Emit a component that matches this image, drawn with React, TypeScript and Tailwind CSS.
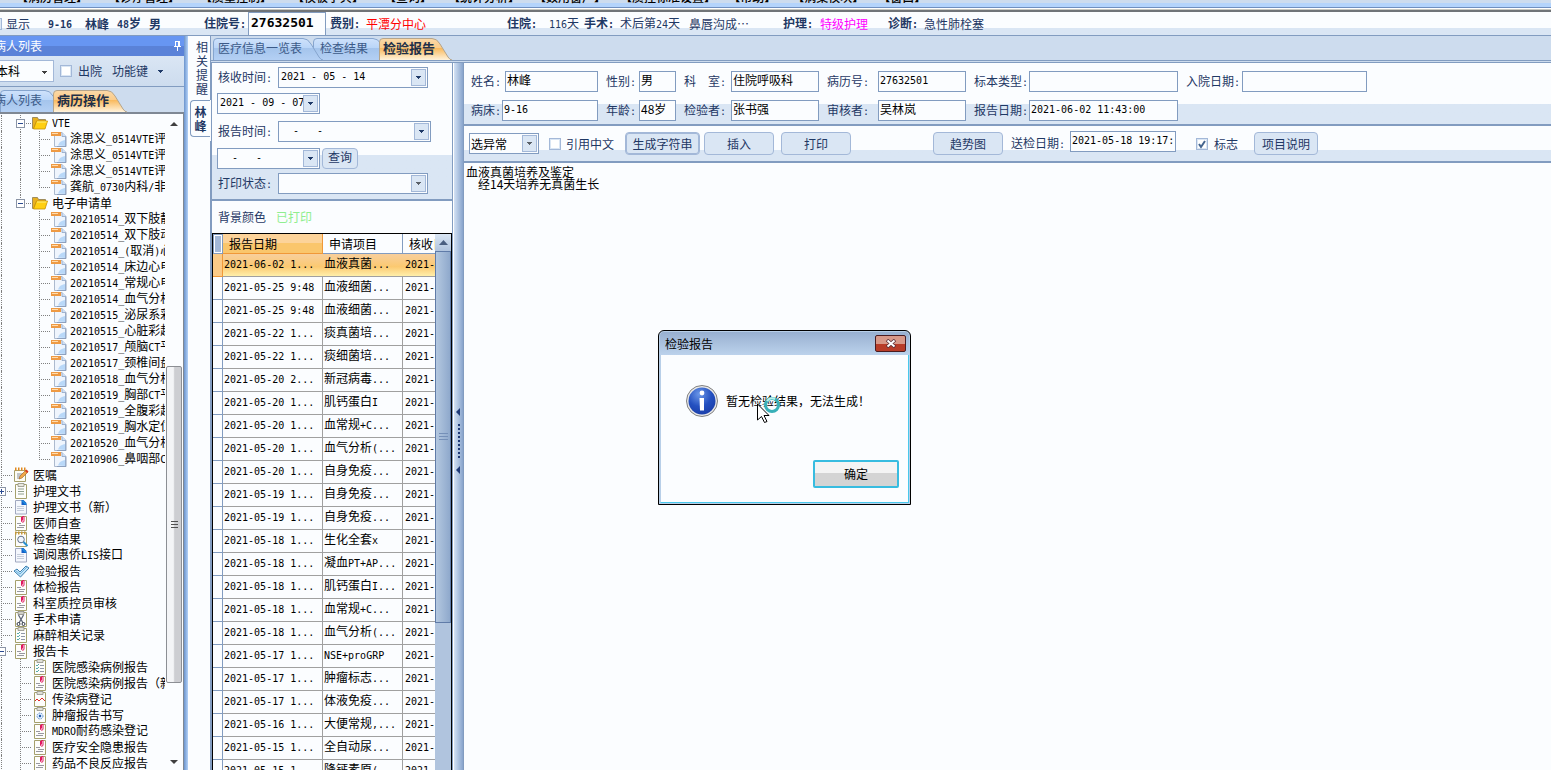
import { ReactNode } from "react";

const menus = [
  { text: "【病历管理】", space: "mr-5" },
  { text: "【诊疗管理】", space: "mr-5" },
  { text: "【质量控制】", space: "mr-5" },
  { text: "【模板字典】", space: "mr-5" },
  { text: "【查询】", space: "mr-4" },
  { text: "【统计分析】", space: "mr-3.5" },
  { text: "【数用窗户】", space: "mr-3.5" },
  { text: "【质控标准设置】", space: "mr-3" },
  { text: "【帮助】", space: "mr-4" },
  { text: "【病案模块】", space: "mr-3.5" },
  { text: "【窗口】", space: "" },
];

type IconName =
  | "folder"
  | "doc"
  | "pencil"
  | "clipboard"
  | "page"
  | "clip"
  | "search"
  | "check"
  | "scissors"
  | "list"
  | "wave"
  | "target";

type TreeRow = {
  text: string;
  icon: IconName;
  depth: 1 | 2 | 3;
  box?: "+" | "-";
  last?: boolean;
  guides?: boolean[];
};

const doc = (text: string, vte = false, last = false): TreeRow => ({
  text,
  icon: "doc",
  depth: 3,
  last,
  guides: [true, vte],
});

const tree: TreeRow[] = [
  { text: "VTE", icon: "folder", depth: 2, box: "-", guides: [true] },
  doc("涂思义_0514VTE评估", true),
  doc("涂思义_0514VTE评估", true),
  doc("涂思义_0514VTE评估", true),
  doc("龚航_0730内科/非手术", true, true),
  { text: "电子申请单", icon: "folder", depth: 2, box: "-", last: true, guides: [true] },
  doc("20210514_双下肢静脉"),
  doc("20210514_双下肢动脉"),
  doc("20210514_(取消)心电"),
  doc("20210514_床边心电图"),
  doc("20210514_常规心电图"),
  doc("20210514_血气分析"),
  doc("20210515_泌尿系彩超"),
  doc("20210515_心脏彩超"),
  doc("20210517_颅脑CT平扫"),
  doc("20210517_颈椎间盘"),
  doc("20210518_血气分析"),
  doc("20210519_胸部CT平扫"),
  doc("20210519_全腹彩超"),
  doc("20210519_胸水定位"),
  doc("20210520_血气分析"),
  doc("20210906_鼻咽部CT", false, true),
  { text: "医嘱", icon: "pencil", depth: 1 },
  { text: "护理文书", icon: "clipboard", depth: 1, box: "+" },
  { text: "护理文书（新）", icon: "page", depth: 1 },
  { text: "医师自查", icon: "clip", depth: 1 },
  { text: "检查结果", icon: "search", depth: 1 },
  { text: "调阅惠侨LIS接口", icon: "page", depth: 1 },
  { text: "检验报告", icon: "check", depth: 1 },
  { text: "体检报告", icon: "clip", depth: 1 },
  { text: "科室质控员审核", icon: "clip", depth: 1 },
  { text: "手术申请", icon: "scissors", depth: 1 },
  { text: "麻醉相关记录", icon: "list", depth: 1 },
  { text: "报告卡", icon: "clip", depth: 1, box: "-" },
  { text: "医院感染病例报告", icon: "list", depth: 2, guides: [true] },
  { text: "医院感染病例报告（新）", icon: "clip", depth: 2, guides: [true] },
  { text: "传染病登记", icon: "wave", depth: 2, guides: [true] },
  { text: "肿瘤报告书写", icon: "target", depth: 2, guides: [true] },
  { text: "MDRO耐药感染登记", icon: "clip", depth: 2, guides: [true] },
  { text: "医疗安全隐患报告", icon: "clip", depth: 2, guides: [true] },
  { text: "药品不良反应报告", icon: "clip", depth: 2, guides: [true] },
];

const reports = [
  ["2021-06-02 1...", "血液真菌..."],
  ["2021-05-25 9:48", "血液细菌..."],
  ["2021-05-25 9:48", "血液细菌..."],
  ["2021-05-22 1...", "痰真菌培..."],
  ["2021-05-22 1...", "痰细菌培..."],
  ["2021-05-20 2...", "新冠病毒..."],
  ["2021-05-20 1...", "肌钙蛋白I"],
  ["2021-05-20 1...", "血常规+C..."],
  ["2021-05-20 1...", "血气分析(..."],
  ["2021-05-20 1...", "自身免疫..."],
  ["2021-05-19 1...", "自身免疫..."],
  ["2021-05-19 1...", "自身免疫..."],
  ["2021-05-18 1...", "生化全套x"],
  ["2021-05-18 1...", "凝血PT+AP..."],
  ["2021-05-18 1...", "肌钙蛋白I..."],
  ["2021-05-18 1...", "血常规+C..."],
  ["2021-05-18 1...", "血气分析(..."],
  ["2021-05-17 1...", "NSE+proGRP"],
  ["2021-05-17 1...", "肿瘤标志..."],
  ["2021-05-17 1...", "体液免疫..."],
  ["2021-05-16 1...", "大便常规,..."],
  ["2021-05-15 1...", "全自动尿..."],
  ["2021-05-15 1...", "降钙素原(..."],
];

const fieldRows = [
  [
    { label: "姓名:", value: "林峰", lw: "w-[34px]", iw: "w-[93px]" },
    { label: "性别:", value: "男", lw: "w-[33px]", iw: "w-[37px]" },
    { label: "科　室:", value: "住院呼吸科", lw: "w-[47px]", iw: "w-[88px]" },
    { label: "病历号:", value: "27632501", lw: "w-[51px]", iw: "w-[88px]" },
    { label: "标本类型:", value: "", lw: "w-[55px]", iw: "w-[149px]" },
    { label: "入院日期:", value: "", lw: "w-[56px]", iw: "w-[125px]" },
  ],
  [
    { label: "病床:", value: "9-16", lw: "w-[31px]", iw: "w-[96px]" },
    { label: "年龄:", value: "48岁", lw: "w-[33px]", iw: "w-[37px]" },
    { label: "检验者:", value: "张书强", lw: "w-[47px]", iw: "w-[88px]" },
    { label: "审核者:", value: "吴林岚", lw: "w-[51px]", iw: "w-[88px]" },
    { label: "报告日期:", value: "2021-06-02 11:43:00", lw: "w-[55px]", iw: "w-[149px]" },
  ],
];

// Half-width runs use a monospaced face, two of them fill one CJK cell
const Mixed = ({ children }: { children: string }) => (
  <>
    {children.split(/([\x20-\x7e]+)/).map((part, i) =>
      i % 2 ? (
        <span key={i} className="font-['DejaVu_Sans_Mono',monospace] text-[10px] whitespace-pre">
          {part}
        </span>
      ) : (
        part
      ),
    )}
  </>
);

const isLatin = (value: string) => /^[\x20-\x7e]+$/.test(value);

const TextBox = ({ id, value, width }: { id: string; value: string; width: string }) => (
  <input
    id={id}
    defaultValue={value}
    className={`h-[21px] border border-[#829cc0] bg-[#fbfdff] pl-px text-black outline-none ${width} ${
      isLatin(value) ? "pb-0.5 font-['DejaVu_Sans_Mono',monospace] text-[10px]" : "pb-1 text-xs"
    }`}
  />
);

const Arrow = ({ color = "#1f3a68" }: { color?: string }) => (
  <svg width="5" height="3" viewBox="0 0 5 3" shapeRendering="crispEdges">
    <path d="M0 0h5v1H4v1H3v1H2V2H1V1H0z" fill={color} />
  </svg>
);

const DateCombo = ({ id, label, value, width }: { id: string; label: string; value: string; width: string }) => (
  <div className={`flex h-[21px] border border-[#829cc0] bg-[#fbfdff] p-px ${width}`}>
    <input
      id={id}
      aria-label={label}
      defaultValue={value}
      className="min-w-0 flex-1 bg-transparent pb-0.5 pl-px font-['DejaVu_Sans_Mono',monospace] text-[10px] text-black outline-none"
    />
    <button
      aria-label={`${label}选择`}
      className="flex w-[15px] items-center justify-center border border-[#a3b8d8] bg-[#dae6f4]"
    >
      <Arrow />
    </button>
  </div>
);

const SelectBox = ({ id, label, value, width }: { id: string; label: string; value: string; width: string }) => (
  <div className={`relative h-[21px] ${width}`}>
    <select
      id={id}
      aria-label={label}
      className="h-full w-full appearance-none border border-[#829cc0] bg-[#fbfdff] px-px text-xs text-black outline-none"
    >
      <option>{value}</option>
    </select>
    <span className="pointer-events-none absolute top-0.5 right-0.5 bottom-0.5 flex w-[15px] items-center justify-center border border-[#a3b8d8] bg-[#dae6f4]">
      <Arrow color="#5a6068" />
    </span>
  </div>
);

const PushButton = ({ children, className = "" }: { children: ReactNode; className?: string }) => (
  <button
    className={`rounded-sm border border-[#a3b8d8] bg-[#dae6f4] text-center leading-none text-[#1f3864] ${className}`}
  >
    {children}
  </button>
);

const CheckBox = ({ id, checked = false }: { id: string; checked?: boolean }) => (
  <span className="relative flex size-3">
    <input
      id={id}
      type="checkbox"
      defaultChecked={checked}
      className="peer size-3 appearance-none border border-[#a3b8d8] bg-white ring-1 ring-[#dae6f4] ring-inset"
    />
    <svg
      viewBox="0 0 12 12"
      className="pointer-events-none absolute inset-0 hidden peer-checked:block"
      fill="none"
      stroke="#44658f"
      strokeWidth="2"
    >
      <path d="M3 6l2 3 4-6" />
    </svg>
  </span>
);

const Tab = ({
  children,
  active = false,
  width,
  shape,
  className = "",
}: {
  children: ReactNode;
  active?: boolean;
  width: string;
  shape: number;
  className?: string;
}) => (
  <button
    role="tab"
    aria-selected={active}
    className={`relative h-[22px] shrink-0 pb-[3px] text-left ${width} ${className}`}
  >
    <svg className="absolute inset-0 overflow-visible" width={shape} height="22">
      <defs>
        <linearGradient id={active ? "tabOn" : "tabOff"} x1="0" y1="0" x2="0" y2="1">
          <stop offset="0" stopColor={active ? "#fbd9a8" : "#cfe2fb"} />
          <stop offset="0.45" stopColor={active ? "#fbcb88" : "#b9d5f8"} />
          <stop offset="0.45" stopColor={active ? "#f9b95c" : "#a4c4ec"} />
          <stop offset="1" stopColor={active ? "#fff3dc" : "#b4d0f4"} />
        </linearGradient>
      </defs>
      <path
        d={`M0.5 22V4Q0.5 0.5 4 0.5H${shape - 20}Q${shape - 15} 0.5 ${shape - 12} 6L${shape - 4} 19Q${shape - 2} 22 ${shape} 22`}
        fill={`url(#${active ? "tabOn" : "tabOff"})`}
        stroke={active ? "#b5a58c" : "#86a5ce"}
      />
    </svg>
    <span className={`relative whitespace-nowrap ${active ? "text-[13px] font-bold text-[#1f3048]" : "text-[#3c5a88]"}`}>
      {children}
    </span>
  </button>
);

const sheet = <path d="M2.5 1.5h11v14h-11z" fill="#fdfdfb" stroke="#a5a06c" />;

const icons: Record<IconName, ReactNode> = {
  folder: (
    <>
      <path d="M0.500 2.500h5l1 2h7v3H4l-2 6H.5z" fill="#e8b020" stroke="#8a7a50" strokeWidth=".8" />
      <path d="M4.500 6H15.500l-2.500 8H1.500z" fill="#ffcf10" stroke="#c89000" strokeWidth=".8" />
      <path d="M5 7h9.500" stroke="#fff080" />
    </>
  ),
  doc: (
    <>
      <path d="M3.500 1.500h7.500l4 4v10h-11.500z" fill="#eff5fd" stroke="#a4b2c8" strokeWidth=".9" />
      <path d="M11 1.500v4h4" fill="#cfe0f6" stroke="#8fa4c4" strokeWidth=".8" />
      <path d="M7 14.500c1-3 3-5 7.500-5.500v6z" fill="#b9d8f8" />
      <path d="M14.700 6v9.700H6" stroke="#7f94b4" fill="none" strokeWidth=".8" />
      <path d="M0 1h10v4H0z" fill="#ee9a44" />
      <path d="M1 2.500h6" stroke="#ffdcae" />
    </>
  ),
  pencil: (
    <>
      <path d="M1.500 3.500h11v11h-11z" fill="#fdfdf4" stroke="#a5a06c" />
      <path d="M2 2h11" stroke="#e08a20" strokeWidth="3" strokeDasharray="1.500 1.500" />
      <path d="M4 7h6M4 9h4M4 11h3" stroke="#8890a0" />
      <path d="M6 12l1-3 6-6 2 2-6 6z" fill="#f0a848" stroke="#a06020" strokeWidth=".6" />
      <path d="M12 4l1.500-1.500 2 2L14 6z" fill="#d83a20" />
    </>
  ),
  clipboard: (
    <>
      {sheet}
      <path d="M5 0.500h6v3H5z" fill="#e8e8e0" stroke="#909080" strokeWidth=".8" />
      <path d="M5 6h6M5 8.500h6M5 11h6" stroke="#90a090" />
    </>
  ),
  page: (
    <>
      <path d="M2.500 1.500h7l4 4v9.500h-11z" fill="#f4f7fd" stroke="#a0a8c0" />
      <path d="M8.500 1h2l3 3v2h-5z" fill="#1460c8" />
      <path d="M9 1.500l4 4" stroke="#20b0f0" />
      <path d="M4 7.500h7M4 9.500h7M4 11.500h7" stroke="#b8c0d0" strokeWidth=".8" />
    </>
  ),
  clip: (
    <>
      {sheet}
      <path d="M4 8.500h4M4 12.500h7M6 10.500h6" stroke="#9898a0" />
      <path d="M8.500 2v4.500q1.500 1.500 2.500 0V1.500H9.500v4" fill="none" stroke="#e01860" />
    </>
  ),
  search: (
    <>
      {sheet}
      <path d="M2 2h11" stroke="#c89838" strokeWidth="3" strokeDasharray="1.500 1.500" />
      <circle cx="8" cy="8.500" r="3.300" fill="#f0f6ff" stroke="#607088" />
      <path d="M10.500 11l4 4" stroke="#2890d0" strokeWidth="2" />
    </>
  ),
  check: (
    <>
      <path d="M1 8l3-2 3 3 6-6 3 2-8.500 9z" fill="#c4e4f8" stroke="#3c80b0" />
      <path d="M3 8l4 3 7-7" fill="none" stroke="#6cb4e0" />
    </>
  ),
  scissors: (
    <>
      {sheet}
      <path d="M5 .5h6v3H5z" fill="#d0d0c8" stroke="#808078" strokeWidth=".7" />
      <path d="M5.500 4l4.500 8M10.500 4L6 12" stroke="#606878" strokeWidth="1.300" />
      <circle cx="5.500" cy="13" r="1.500" fill="none" stroke="#303848" />
      <circle cx="10.500" cy="13" r="1.500" fill="none" stroke="#303848" />
    </>
  ),
  list: (
    <>
      {sheet}
      <path d="M5 .5h6v3H5z" fill="#e0e0d8" stroke="#909088" strokeWidth=".8" />
      <path d="M4 6l1 1 2-2M4 9l1 1 2-2M4 12l1 1 2-2" fill="none" stroke="#40a0a0" strokeWidth=".9" />
      <path d="M8 6.500h4M8 9.500h4M8 12.500h4" stroke="#9098a8" />
    </>
  ),
  wave: (
    <>
      {sheet}
      <path d="M5 .5h6v3H5z" fill="#e0e0d8" stroke="#909088" strokeWidth=".8" />
      <path d="M3 10l2-2 2 2 3-3 3 3" fill="none" stroke="#e02828" />
    </>
  ),
  target: (
    <>
      {sheet}
      <path d="M5 .5h6v3H5z" fill="#e0e0d8" stroke="#909088" strokeWidth=".8" />
      <circle cx="8" cy="9" r="3" fill="#dcecff" stroke="#6090c8" strokeDasharray="1.500 1" />
      <circle cx="8" cy="9" r="1.200" fill="#2058a8" />
    </>
  ),
};

const Connector = ({ box, last }: { box?: "+" | "-"; last?: boolean }) => (
  <svg width="12" height="16" className="shrink-0 overflow-visible" shapeRendering="crispEdges">
    <path d={`M0.5 0V${last ? 8 : 16}M0 8.500H11`} stroke="#808080" strokeDasharray="1 1" />
    {box && <path d="M-3.500 4.500h8v8h-8z" fill="#fff" stroke="#8a94a6" />}
    {box && <path d={box === "+" ? "M-2 8.500h5M0.500 6v5" : "M-2 8.500h5"} stroke="#2a4a90" />}
  </svg>
);

const Node = ({ row }: { row: TreeRow }) => (
  <li className="flex h-4 items-center whitespace-nowrap">
    {row.guides?.map((on, i) => (
      <span key={i} className={`h-4 w-[19px] shrink-0 ${on ? "border-l border-dotted border-[#808080]" : ""}`} />
    ))}
    <Connector box={row.box} last={row.last} />
    <svg width="16" height="16" viewBox="0 0 16 16" className={row.depth === 3 ? "mr-[3px] shrink-0" : "mr-1 shrink-0"}>
      {icons[row.icon]}
    </svg>
    <span className="leading-4">
      <Mixed>{row.text}</Mixed>
    </span>
  </li>
);

const Sidebar = () => (
  <aside className="flex w-[184px] shrink-0 flex-col overflow-hidden bg-[#cddcee]">
    <header className="flex h-5 items-center justify-between bg-linear-to-b from-[#6796f2] from-50% to-[#5a82d8] to-50% pr-0.5 text-white">
      <h2 className="-ml-1.5">病人列表</h2>
      <svg width="9" height="12" viewBox="0 0 9 12" fill="none" stroke="#fff" shapeRendering="crispEdges">
        <path d="M2.500 6V1.500h4V6M5.500 2v4M1 6.500h7M4.500 7v4" />
      </svg>
    </header>
    <div className="flex h-[31px] items-center border-b border-[#829cc0] bg-linear-to-b from-[#dae6f4] to-[#cddcee] text-[#1f3864]">
      <div className="relative h-[22px] w-[54px] border border-l-0 border-[#a3b8d8] bg-[#fbfdff]">
        <select aria-label="科室" className="-ml-1 h-full w-full appearance-none text-xs text-black outline-none">
          <option>本科</option>
        </select>
        <span className="pointer-events-none absolute top-2.5 right-1.5 flex">
          <Arrow color="#404040" />
        </span>
      </div>
      <label className="ml-1.5 flex items-center gap-1.5">
        <CheckBox id="left" />
        出院
      </label>
      <button className="ml-2.5 flex items-center gap-2.5">
        功能键
        <Arrow />
      </button>
    </div>
    <div role="tablist" className="flex h-[25px] items-end">
      <Tab width="w-[53px]" shape={65}>
        <span className="-ml-1.5">病人列表</span>
      </Tab>
      <Tab active width="w-[74px]" shape={74} className="pl-1">
        病历操作
      </Tab>
    </div>
    <div className="flex min-h-0 flex-1 border-t-2 border-r border-[#7f8894] bg-[#fbfdff] pt-px text-black">
      <ul className="min-w-0 flex-1 overflow-hidden pl-px">
        {tree.map((row, i) => (
          <Node key={i} row={row} />
        ))}
      </ul>
      <div className="flex w-[18px] shrink-0 flex-col items-center pt-[7px]">
        <svg width="8" height="4" viewBox="0 0 8 4" fill="#404040">
          <path d="M4 0l4 4H0z" />
        </svg>
        <div className="mt-[240px] flex h-[317px] w-4 items-center justify-center rounded-xs border border-[#8c8f94] bg-linear-to-r from-[#f4f5f7] from-45% to-[#cdced2] to-55%">
          <svg width="7" height="8" stroke="#505050" shapeRendering="crispEdges">
            <path d="M0 .5h7M0 3.500h7M0 6.500h7" />
          </svg>
        </div>
        <svg width="8" height="4" viewBox="0 0 8 4" fill="#404040" className="mt-auto mb-1.5">
          <path d="M0 0h8L4 4z" />
        </svg>
      </div>
    </div>
  </aside>
);

const PatientBar = () => (
  <header className="flex h-6 items-center border-b border-[#829cc0] bg-linear-to-b from-[#fbfdff] from-70% to-[#dae6f4] to-70% whitespace-nowrap text-[#1f3864]">
    <label className="flex w-12 items-center gap-1">
      <span className="-ml-2.5">
        <CheckBox id="show" />
      </span>
      显示
    </label>
    <b className="w-[37px]">
      <Mixed>9-16</Mixed>
    </b>
    <b className="w-8">林峰</b>
    <b className="w-8">
      <Mixed>48岁</Mixed>
    </b>
    <b className="w-[55px]">男</b>
    <label htmlFor="admission" className="w-11 font-bold">
      <Mixed>住院号:</Mixed>
    </label>
    <input
      id="admission"
      defaultValue="27632501"
      className="h-6 w-[78px] border border-[#829cc0] bg-[#fbfdff] px-0.5 pb-0.5 font-['DejaVu_Sans_Mono',monospace] text-[13px] font-bold text-black outline-none"
    />
    <b className="ml-1 w-9">
      <Mixed>费别:</Mixed>
    </b>
    <span className="w-[141px] text-[#f00]">平潭分中心</span>
    <b className="w-[42px]">
      <Mixed>住院:</Mixed>
    </b>
    <span className="w-[35px]">
      <Mixed>116天</Mixed>
    </span>
    <b className="w-9">
      <Mixed>手术:</Mixed>
    </b>
    <span className="w-[69px]">
      <Mixed>术后第24天</Mixed>
    </span>
    <span className="w-[94px]">鼻唇沟成…</span>
    <b className="w-[37px]">
      <Mixed>护理:</Mixed>
    </b>
    <span className="w-[68px] text-[#f0f]">特级护理</span>
    <b className="w-9">
      <Mixed>诊断:</Mixed>
    </b>
    <span>急性肺栓塞</span>
  </header>
);

const QueryPanel = () => (
  <section className="flex w-[242px] shrink-0 flex-col border-x border-[#829cc0] bg-[#fbfdff]">
    <form className="flex flex-col border-b-2 border-[#829cc0] bg-linear-to-b from-[#fbfdff] from-68% to-[#dae6f4] to-68% pt-1 pb-[5px] pl-[5px] text-[#1f3864]">
      <div className="flex items-center">
        <label htmlFor="recv-from" className="w-[61px] pl-px">
          <Mixed>核收时间:</Mixed>
        </label>
        <DateCombo id="recv-from" label="核收时间起" value="2021 - 05 - 14" width="w-[150px]" />
      </div>
      <div className="mt-[5px] flex">
        <DateCombo id="recv-to" label="核收时间止" value="2021 - 09 - 07" width="w-[103px]" />
      </div>
      <div className="mt-[7px] flex items-center">
        <label htmlFor="rep-from" className="w-[61px] pl-px">
          <Mixed>报告时间:</Mixed>
        </label>
        <DateCombo id="rep-from" label="报告时间起" value="  -   -" width="w-[153px]" />
      </div>
      <div className="mt-1.5 flex gap-0.5">
        <DateCombo id="rep-to" label="报告时间止" value="  -   -" width="w-[103px]" />
        <PushButton className="h-[21px] w-9 pb-1">查询</PushButton>
      </div>
      <div className="mt-1 flex items-center">
        <label htmlFor="print-state" className="w-[61px] pl-px">
          <Mixed>打印状态:</Mixed>
        </label>
        <SelectBox id="print-state" label="打印状态" value="" width="w-[150px]" />
      </div>
    </form>
    <p className="flex h-8 shrink-0 items-center gap-2.5 pl-1.5 text-[#1f3864]">
      背景颜色 <span className="text-[#90ee90]">已打印</span>
    </p>
    <div className="flex min-h-0 flex-1 border border-b-0 border-black text-black">
      <div className="min-w-0 flex-1 overflow-hidden">
        <table className="w-[290px] table-fixed border-separate border-spacing-0 text-left leading-4 whitespace-nowrap">
          <thead>
            <tr className="h-5">
              <th className="w-2.5 border border-[#829cc0] bg-[#a3b8d8] ring-1 ring-white ring-inset" />
              <th className="w-[100px] border-r border-b border-[#f09838] bg-linear-to-b from-[#fcd39a] from-50% to-[#fac66c] to-50% pl-1.5 font-normal">
                报告日期
              </th>
              <th className="w-20 border-r border-b border-[#829cc0] pl-1.5 font-normal">申请项目</th>
              <th className="w-[100px] border-r border-b border-[#829cc0] pl-1.5 font-normal">核收日期</th>
            </tr>
          </thead>
          <tbody>
            {reports.map(([date, item], i) => (
              <tr
                key={i}
                className={
                  i === 0
                    ? "h-[23px] bg-linear-to-b from-[#f8cf9c] via-[#fbc970] via-55% to-[#fff3b0]"
                    : "h-[23px]"
                }
              >
                <td className={`border-r border-b ${i === 0 ? "border-[#f09838] bg-[#fbcb88]" : "border-[#829cc0]"}`} />
                <td className={`border-b border-[#a0a0a0] pb-0.5 pl-px ${i === 0 ? "" : "border-r"}`}>
                  <Mixed>{date}</Mixed>
                </td>
                <td className={`border-b border-[#a0a0a0] pb-0.5 pl-px ${i === 0 ? "pr-px" : "border-r"}`}>
                  <Mixed>{item}</Mixed>
                </td>
                <td className="border-b border-[#a0a0a0] pb-0.5 pl-0.5">
                  <Mixed>{date.slice(0, 10)}</Mixed>
                </td>
              </tr>
            ))}
          </tbody>
        </table>
      </div>
      <div className="flex w-4 shrink-0 flex-col bg-[#b0c4de]">
        <div className="flex h-[18px] items-center justify-center border-b border-[#5f7ba8] bg-linear-to-b from-[#dae6f4] to-[#b0c4de]">
          <svg width="9" height="5" viewBox="0 0 9 5" fill="#4a5f80">
            <path d="M4.500 0L9 5H0z" />
          </svg>
        </div>
        <div className="flex h-[371px] items-center justify-center border border-t-0 border-[#5f7ba8] bg-linear-to-r from-[#b4c8e0] to-[#8fa9cc]">
          <svg width="9" height="8" stroke="#7590b8" shapeRendering="crispEdges">
            <path d="M0 .5h9M0 3.500h9M0 6.500h9" />
          </svg>
        </div>
      </div>
    </div>
  </section>
);

const Splitter = () => (
  <div className="flex w-2.5 shrink-0 items-center justify-center border-l border-white bg-linear-to-r from-[#d4e2f4] to-[#88a4cc]">
    <svg width="6" height="70" viewBox="0 0 6 70" fill="#1f3a78" className="mt-12 mr-0.5 shrink-0">
      <path d="M5 2v8L1 6zM5 60v8l-4-4z" />
      <path d="M4 18v34" stroke="#1f3a78" strokeWidth="2" strokeDasharray="2 2" />
    </svg>
  </div>
);

const ReportPanel = () => (
  <section className="flex min-w-0 flex-1 flex-col border-l border-[#829cc0] bg-[#fbfdff] text-[#1f3864]">
    <form className="flex shrink-0 flex-col gap-2 border-b-2 border-[#829cc0] bg-linear-to-b from-[#fbfdff] from-68% to-[#dae6f4] to-68% pt-2 pb-[3px] pl-[7px]">
      {fieldRows.map((fields, i) => (
        <div key={i} className="flex gap-2 whitespace-nowrap">
          {fields.map((field) => (
            <div key={field.label} className="flex items-center">
              <label htmlFor={field.label} className={field.lw}>
                <Mixed>{field.label}</Mixed>
              </label>
              <TextBox id={field.label} value={field.value} width={field.iw} />
            </div>
          ))}
        </div>
      ))}
    </form>
    <div className="flex h-[37px] shrink-0 items-center border-b-2 border-[#829cc0] bg-linear-to-b from-[#fbfdff] from-68% to-[#dae6f4] to-68% pl-[5px] whitespace-nowrap">
      <SelectBox id="pick" label="选择方式" value="选异常" width="w-[70px]" />
      <label className="ml-2.5 flex w-[76px] items-center gap-[5px]">
        <CheckBox id="quote" />
        引用中文
      </label>
      <PushButton className="h-[23px] w-[75px] border-[#829cc0] bg-[#cddcee] ring-1 ring-[#a3b8d8] ring-inset">
        生成字符串
      </PushButton>
      <PushButton className="ml-1 h-[23px] w-[70px]">插入</PushButton>
      <PushButton className="ml-[7px] h-[23px] w-[70px]">打印</PushButton>
      <PushButton className="ml-[82px] h-[23px] w-[70px]">趋势图</PushButton>
      <label htmlFor="sent" className="ml-2 w-[59px]">
        <Mixed>送检日期:</Mixed>
      </label>
      <div className="mb-1 flex">
        <TextBox id="sent" value="2021-05-18 19:17:" width="w-[106px]" />
      </div>
      <label className="ml-5 flex items-center gap-1.5">
        <CheckBox id="flag" checked />
        标志
      </label>
      <PushButton className="ml-4 h-[23px] w-16">项目说明</PushButton>
    </div>
    <textarea
      aria-label="检验结果"
      className="min-h-0 flex-1 resize-none px-0.5 pt-[3px] text-xs leading-3 text-black outline-none"
      defaultValue={"血液真菌培养及鉴定\n　经14天培养无真菌生长"}
    />
  </section>
);

const MessageDialog = () => (
  <div
    role="dialog"
    aria-label="检验报告"
    className="absolute top-[330px] left-[658px] flex h-[175px] w-[253px] flex-col rounded-t-md border border-black bg-[#b8cfe8] p-px text-black"
  >
    <div className="flex h-[23px] shrink-0 items-center justify-between rounded-t bg-linear-to-b from-[#98b0d0] to-[#bcd2ec] pr-[3px] pl-[5px]">
      <h3>检验报告</h3>
      <button
        aria-label="关闭"
        className="flex h-[17px] w-[31px] items-center justify-center rounded-xs border border-[#4a1c20] bg-linear-to-b from-[#d89888] from-50% to-[#b83c28] to-50%"
      >
        <svg width="12" height="9" viewBox="0 0 12 9">
          <path d="M2 1l8 7M10 1L2 8" stroke="#5a3038" strokeWidth="3.500" />
          <path d="M2.500 1.500l7 6M9.500 1.500l-7 6" stroke="#fff" strokeWidth="2" />
        </svg>
      </button>
    </div>
    <div className="flex flex-1 flex-col justify-between border border-t-0 border-r-[#48c8ec] border-b-[#48c8ec] border-l-[#b8cfe8] bg-[#fbfdff] pt-[30px] pr-[9px] pb-3.5 pl-[25px]">
      <p className="flex items-center gap-2 whitespace-nowrap">
        <svg width="32" height="32" viewBox="0 0 32 32">
          <defs>
            <radialGradient id="info" cx=".4" cy=".25" r=".9">
              <stop offset="0" stopColor="#6c98e8" />
              <stop offset=".5" stopColor="#2450c0" />
              <stop offset="1" stopColor="#1838a0" />
            </radialGradient>
          </defs>
          <circle cx="16" cy="16" r="15.500" fill="#e8e8e8" stroke="#808080" />
          <circle cx="16" cy="16" r="13.500" fill="url(#info)" />
          <circle cx="16" cy="8" r="2.400" fill="#fff" />
          <path d="M13.500 13h4.500v12.500h-4z" fill="#fff" />
        </svg>
        暂无检验结果，无法生成！
      </p>
      <button className="h-7 w-[86px] self-end rounded-xs border-2 border-[#38bce0] bg-linear-to-b from-[#f4f4f4] from-45% to-[#d4d4d4] to-45%">
        确定
      </button>
    </div>
    <svg width="26" height="32" viewBox="0 0 26 32" className="pointer-events-none absolute top-[66px] left-[97px]">
      <circle cx="16" cy="8" r="6.500" fill="none" stroke="#38b0b8" strokeWidth="3" />
      <path d="M11 4a6.500 6.500 0 0 1 8-2" fill="none" stroke="#b8f0ec" strokeWidth="2" />
      <path d="M1.500 7v16l4-3.500 3 6 2.500-1-3-6h5z" fill="#fff" stroke="#000" />
    </svg>
  </div>
);

export default function App() {
  return (
    <div className="relative flex h-screen flex-col overflow-hidden bg-[#cddcee] font-['Noto_Sans_CJK_SC',sans-serif] text-xs">
      <nav className="flex h-2 shrink-0 items-end overflow-hidden border-b border-[#7090c0] bg-linear-to-b from-[#cddcee] from-40% to-[#b4d4fc] to-40% pl-4 leading-4 font-medium whitespace-nowrap text-black">
        {menus.map((menu) => (
          <button key={menu.text} className={`mb-0.5 shrink-0 ${menu.space}`}>
            {menu.text}
          </button>
        ))}
      </nav>
      <div className="h-1 shrink-0 border-t border-b-2 border-t-white border-b-[#707478] bg-[#c8c8c0]" />
      <PatientBar />
      <div className="flex min-h-0 flex-1">
        <Sidebar />
        <div className="w-1 shrink-0 bg-linear-to-r from-[#6c94cc] to-[#b4d2f8]" />
        <div className="flex w-[23px] shrink-0 flex-col bg-[#fbfdff] pl-0.5 text-center leading-[14px] text-[#1f3864]">
          <button className="w-[21px] border-r border-[#829cc0] py-1 pr-0.5 pl-1.5 whitespace-normal">
            相关提醒
          </button>
          <button className="mb-1 h-[37px] w-5 rounded-l-sm border border-r-0 border-[#829cc0] px-px font-bold">
            林峰
          </button>
          <div className="w-[21px] flex-1 border-r border-[#829cc0]" />
        </div>
        <main className="flex min-w-0 flex-1 flex-col">
          <div role="tablist" className="flex h-[25px] shrink-0 items-end border-b border-[#829cc0] pl-0.5">
            <Tab width="w-[100px]" shape={110} className="z-10 pl-[5px]">
              医疗信息一览表
            </Tab>
            <Tab width="w-[66px]" shape={80} className="pl-[7px]">
              检查结果
            </Tab>
            <Tab active width="w-[73px]" shape={73} className="z-10 pl-1">
              检验报告
            </Tab>
          </div>
          <div className="mt-px flex min-h-0 flex-1 border-t border-[#829cc0]">
            <QueryPanel />
            <Splitter />
            <ReportPanel />
          </div>
        </main>
      </div>
      <MessageDialog />
    </div>
  );
}
